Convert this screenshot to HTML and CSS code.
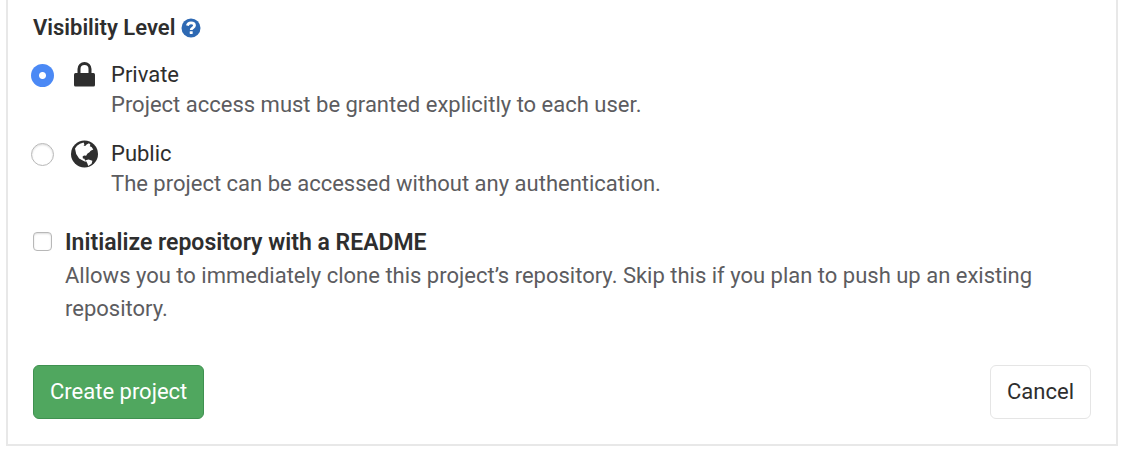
FILE: index.html
```html
<!DOCTYPE html>
<html lang="en">
<head>
<meta charset="utf-8">
<title>New project</title>
<link rel="stylesheet" href="styles.css">
</head>
<body>
<form class="panel">
  <fieldset class="visibility">
    <legend class="legend">
      <span>Visibility Level</span>
      <a class="help" href="#help" aria-label="Visibility help">
        <svg viewBox="0 0 20 20" width="20" height="20" aria-hidden="true">
          <circle cx="10" cy="10" r="9.5" fill="#2e69b3"/>
          <path d="M6.400 7.600C6.800 5.700 8.200 4.900 10 4.900c2 0 3.500 1 3.500 2.700 0 2.200-3.300 2.200-3.300 4.300" fill="none" stroke="#fff" stroke-width="2.800"/>
          <rect x="8.700" y="13.200" width="3" height="2.800" rx=".4" fill="#fff"/>
        </svg>
      </a>
    </legend>
    <div class="option">
      <input class="radio" type="radio" name="visibility" id="private" checked>
      <svg class="icon" viewBox="0 0 28 28" aria-hidden="true">
        <path d="M8 13V8a5.500 5.500 0 0 1 11 0v5" fill="none" stroke="#2e2e2e" stroke-width="3"/>
        <rect x="3" y="12" width="21" height="13.500" rx="1.500" fill="#2e2e2e"/>
      </svg>
      <div class="copy">
        <label class="name" for="private">Private</label>
        <p class="note">Project access must be granted explicitly to each user.</p>
      </div>
    </div>
    <div class="option">
      <input class="radio" type="radio" name="visibility" id="public">
      <svg class="icon" viewBox="0 0 28 28" aria-hidden="true">
        <circle cx="13.500" cy="14" r="13.500" fill="#2e2e2e"/>
        <path d="M4 8.500 6 5.800 9 3.800l3.600-1.200.8 1.800-.8 1.200 1.600.5 1.400-1.700 2.400-1.200 1.400 1.500-.6 1.500 1.800.8 1.700 2.500-2.600 1.200-1.200 1.500-2 1.200-1.400 2.400-2-.2-1.500 1 .3 1.900 1.600.3.4 1.500 1.400.8-1 .6-3-1.500-3.200-1.700L5.200 14z" fill="#fff"/>
        <path d="m14.600 20.200 3-.8 3.800 1.400-.8 3-3.400 2.200-.8-2.600z" fill="#fff"/>
      </svg>
      <div class="copy">
        <label class="name" for="public">Public</label>
        <p class="note">The project can be accessed without any authentication.</p>
      </div>
    </div>
  </fieldset>
  <div class="readme">
    <input class="checkbox" type="checkbox" id="readme">
    <div class="readme-copy">
      <label class="readme-name" for="readme">Initialize repository with a README</label>
      <p class="readme-note">Allows you to immediately clone this project’s repository. Skip this if you plan to push up an existing repository.</p>
    </div>
  </div>
  <div class="actions">
    <button class="button button-create" type="submit">Create project</button>
    <button class="button button-cancel" type="button">Cancel</button>
  </div>
</form>
</body>
</html>
```
FILE: styles.css
```css
* { box-sizing: border-box; }
body {
  margin: 0;
  background: #fff;
  color: #2e2e2e;
  font: 22px/30px Roboto, Inter, sans-serif;
}
.panel {
  margin: 0 7px 0 6px;
  padding: 12px 25px 25px;
  border: 2px solid #e8e8e8;
  border-top: 0;
}
p { margin: 0; }
.visibility { margin: 0; padding: 0; border: 0; }
.legend {
  display: flex;
  align-items: center;
  gap: 6px;
  padding: 0;
  height: 32px;
  font-weight: 600;
}
.help { display: flex; }
.option {
  display: flex;
  align-items: flex-start;
  margin-top: 19px;
}
.legend + .option { margin-top: 16px; }
.radio, .checkbox {
  appearance: none;
  flex: none;
  margin: 0;
  background: #fff;
  border: 1px solid #b8b8b8;
  box-shadow: inset 0 1px 2px #ddd;
}
.radio {
  width: 23px;
  height: 23px;
  margin: 4px 17px 0 -2px;
  border-radius: 50%;
}
.radio:checked {
  border: 0;
  background: radial-gradient(circle, #fff 3px, #4b89f5 4px);
  box-shadow: none;
}
.icon { flex: none; width: 28px; height: 28px; margin: 1px 12px 0 0; }
.copy, .readme-copy { flex: 1; }
.name, .readme-name { display: block; }
.note, .readme-note { color: #5c5c60; }
.readme {
  display: flex;
  gap: 13px;
  margin-top: 27px;
}
.checkbox {
  width: 19px;
  height: 19px;
  margin-top: 6px;
  border-radius: 4px;
}
.readme-name { font-size: 23px; font-weight: 600; line-height: 33px; }
.readme-note { line-height: 33px; }
.actions {
  display: flex;
  justify-content: space-between;
  margin-top: 40px;
}
.button {
  padding: 11px 16px;
  border: 1px solid #e5e5e5;
  border-radius: 6px;
  background: #fff;
  color: #2e2e2e;
  font: inherit;
}
.button-create {
  border-color: #3f9150;
  background: #50a75f;
  color: #fff;
}
```
